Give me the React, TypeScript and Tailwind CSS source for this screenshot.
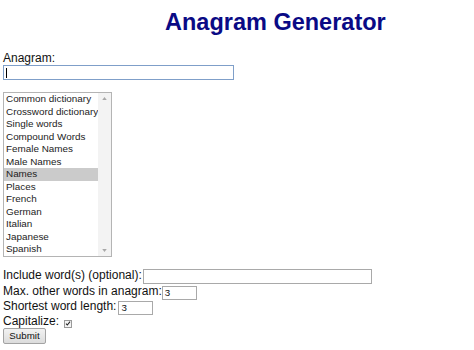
const lists = [
  'Common dictionary',
  'Crossword dictionary',
  'Single words',
  'Compound Words',
  'Female Names',
  'Male Names',
  'Names',
  'Places',
  'French',
  'German',
  'Italian',
  'Japanese',
  'Spanish',
]

function Check() {
  return (
    <span className="ml-[5px] mt-[5.5px] flex h-[8px] w-[8px] items-center justify-center border border-[#9a9a9a] bg-[#f4f4f4]">
      <svg viewBox="0 0 8 8" className="h-[7px] w-[7px]">
        <path d="M1.3 4.2 L3.1 6 L6.7 1.6" fill="none" stroke="#222" strokeWidth="1.4" />
      </svg>
    </span>
  )
}

export default function App() {
  return (
    <div className="h-[350px] w-[474px] overflow-hidden bg-white pl-[3px] font-['Liberation_Sans',Arial,sans-serif] text-[12px] leading-[14px] text-[#111]">
      <h1 className="pl-[162px] pt-[9px] text-[23.5px] font-bold leading-[26px] text-[#0a0a85]">
        Anagram Generator
      </h1>

      <div className="mt-[16px]">Anagram:</div>
      <div className="relative h-[15px] w-[231px] border border-[#7f9fc9] bg-white">
        <span className="absolute left-[2px] top-[2px] h-[10px] w-px bg-black" />
      </div>

      <div className="mt-[12px] flex h-[165px] w-[109px] border border-[#b4b4b4] bg-white">
        <ul className="flex w-[94px] flex-col">
          {lists.map((name) => (
            <li
              key={name}
              className={`h-[12.5px] whitespace-nowrap pl-[2px] text-[9.9px] leading-[12.5px] text-[#222] ${name === 'Names' ? 'bg-[#cbcbcb]' : ''}`}
            >
              {name}
            </li>
          ))}
        </ul>
        <div className="flex flex-1 flex-col items-center justify-between bg-[#f3f3f3] py-[4px]">
          <svg viewBox="0 0 6 4" className="h-[3px] w-[5px]">
            <path d="M0 4 L3 0 L6 4 Z" fill="#a8a8a8" />
          </svg>
          <svg viewBox="0 0 6 4" className="h-[3px] w-[5px]">
            <path d="M0 0 L6 0 L3 4 Z" fill="#a8a8a8" />
          </svg>
        </div>
      </div>

      <div className="mt-[11px] flex h-[16px] items-start gap-[1px]">
        <span>Include word(s) (optional):</span>
        <span className="mt-[1px] h-[15px] w-[229px] border border-[#a9a9a9] bg-white" />
      </div>
      <div className="flex h-[15px] items-start">
        <span>Max. other words in anagram:</span>
        <span className="mt-[1.5px] h-[14px] w-[35px] border border-[#a9a9a9] bg-white pl-[2px] text-[9.75px] leading-[12px]">3</span>
      </div>
      <div className="flex h-[15px] items-start gap-[2px]">
        <span>Shortest word length:</span>
        <span className="mt-[1.5px] h-[14px] w-[35px] border border-[#a9a9a9] bg-white pl-[2px] text-[9.75px] leading-[12px]">3</span>
      </div>
      <div className="flex h-[14px] items-start">
        <span>Capitalize:</span>
        <Check />
      </div>
      <button className="h-[15.5px] w-[43px] rounded-[2px] border border-[#a3a3a3] bg-gradient-to-b from-[#f2f2f2] to-[#dcdcdc] text-[9.75px] leading-[13px] text-[#111]">
        Submit
      </button>
    </div>
  )
}
